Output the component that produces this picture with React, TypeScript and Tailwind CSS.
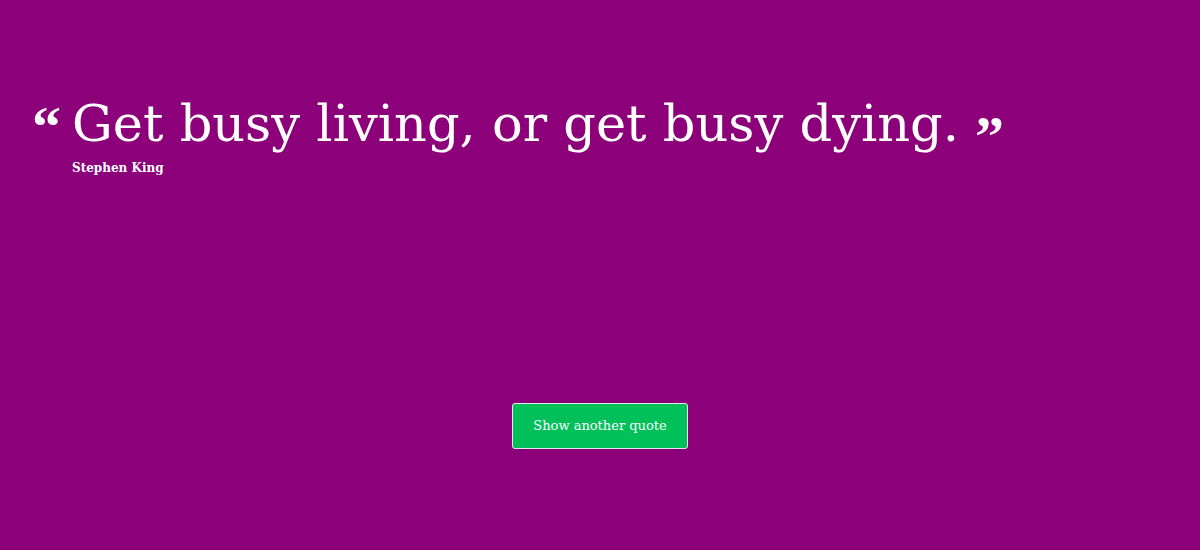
import React from 'react';

const App: React.FC = () => {
  return (
    <div
      className="w-[1200px] h-[550px] bg-[#8c007a] text-white flex flex-col"
      style={{ fontFamily: '"DejaVu Serif", "Liberation Serif", serif' }}
    >
      <div className="pt-[88px] pl-[32px]">
        <div className="flex items-start h-[72px]">
          <span className="font-['Liberation_Serif',serif] text-[58px] leading-none font-bold mt-[10px] w-[40px] h-[40px]">&ldquo;</span>
          <h1 className="text-[51px] leading-[72px] font-normal">Get busy living, or get busy dying.</h1>
          <span className="font-['Liberation_Serif',serif] text-[58px] leading-none font-bold mt-[20px] ml-[16px] h-[40px]">&rdquo;</span>
        </div>
        <p className="pl-[40px] text-[12px] font-bold leading-none mt-[2px]">Stephen King</p>
      </div>
      <div className="flex justify-center mt-[229px]">
        <button className="w-[176px] h-[46px] bg-[#00c05a] border border-[#e8e8e8] rounded-[3px] text-[13px] text-white">
          Show another quote
        </button>
      </div>
    </div>
  );
};

export default App;
